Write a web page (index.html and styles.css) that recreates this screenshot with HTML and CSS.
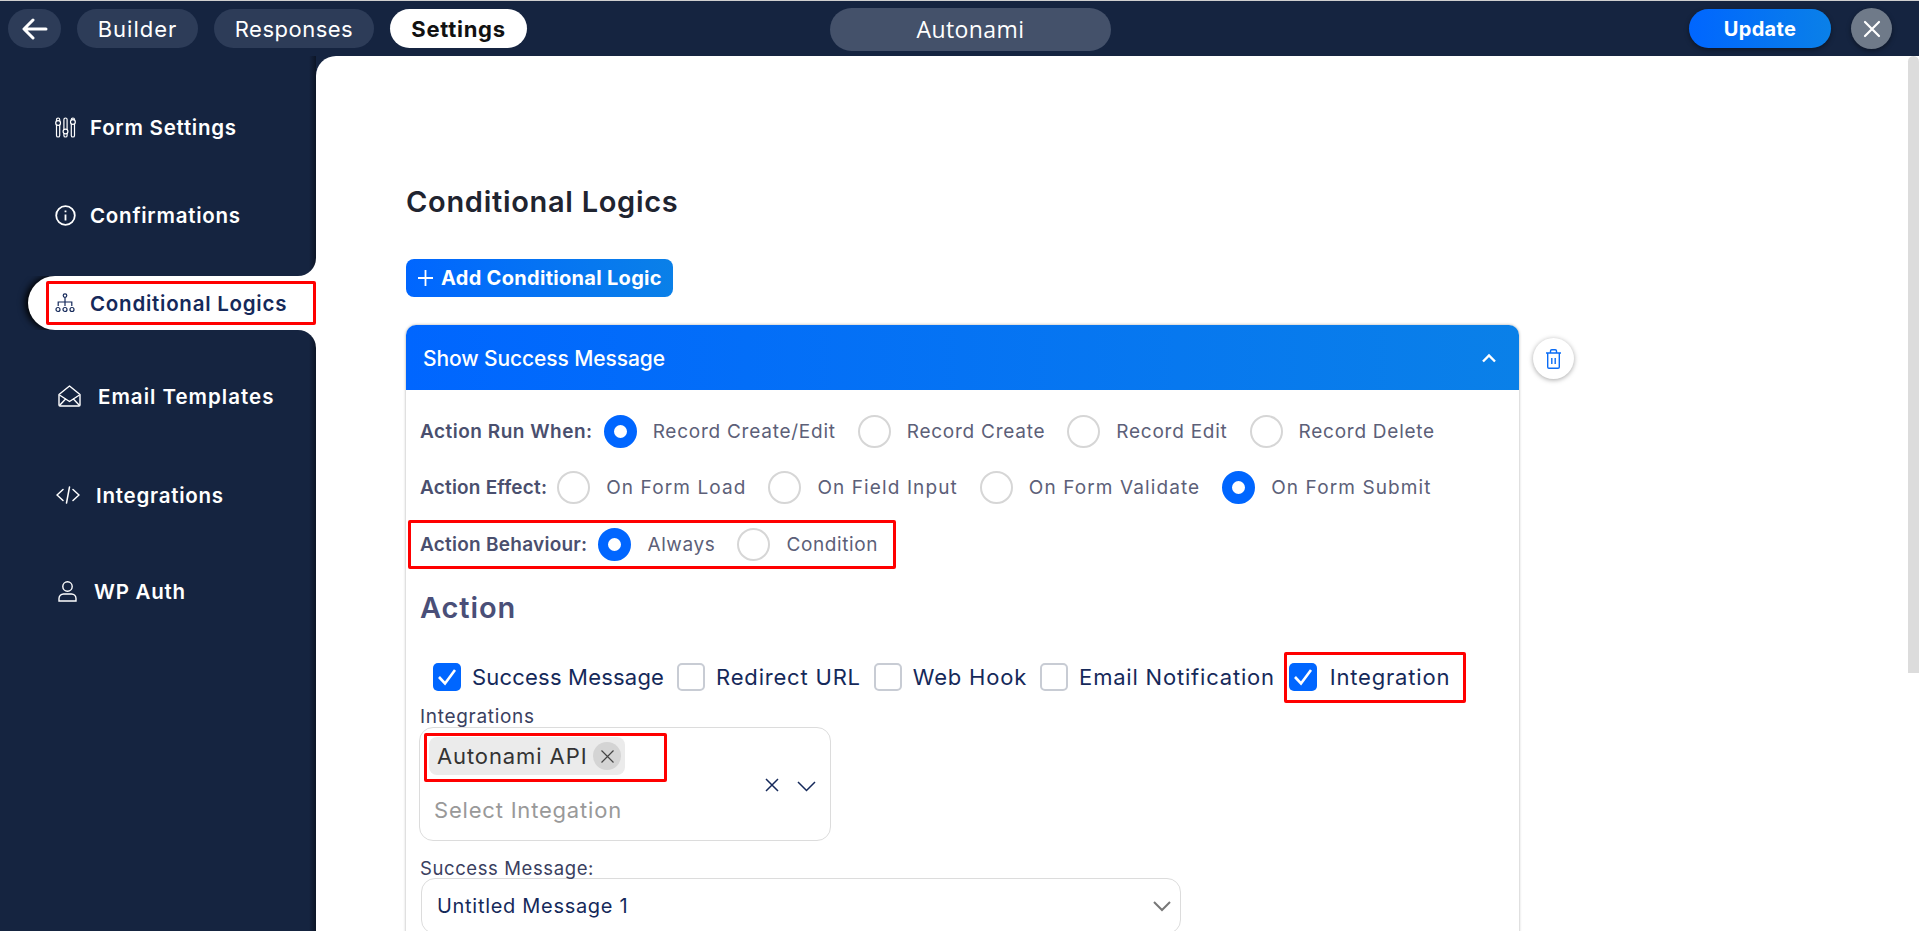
FILE: index.html
```html
<!DOCTYPE html>
<html>
  <head>
    <meta charset="utf-8">
    <title>Autonami - Conditional Logics</title>
    <link rel="stylesheet" href="styles.css">
  </head>
  <body>
    <div class="topbar">
      <div class="pill back">
        <svg width="26" height="22" viewBox="0 0 26 22" fill="none" stroke="#fff" stroke-width="3" stroke-linecap="round" stroke-linejoin="round"><path d="M24 11H3M11 2l-9 9 9 9"/></svg>
      </div>
      <div class="pill builder">Builder</div>
      <div class="pill responses">Responses</div>
      <div class="pill settings">Settings</div>
      <div class="form-name">Autonami</div>
      <div class="update">Update</div>
      <div class="close">
        <svg width="18" height="18" viewBox="0 0 18 18" stroke="#fff" stroke-width="2.2" stroke-linecap="round"><path d="M2 2l14 14M16 2L2 16"/></svg>
      </div>
    </div>

    <div class="page">
      <div class="sidebar">
        <div class="side-block first">
          <div class="side-item">
            <span class="side-icon">
              <svg width="21" height="21" viewBox="0 0 21 21" fill="none" stroke="#fff" stroke-width="1.2"><rect x="1.500" y="1" width="3.200" height="19" rx="1.600"/><rect x="8.900" y="1" width="3.200" height="19" rx="1.600"/><rect x="16.300" y="1" width="3.200" height="19" rx="1.600"/><circle cx="3.100" cy="6" r="2.400" fill="#152440"/><circle cx="10.500" cy="14.500" r="2.400" fill="#152440"/><circle cx="17.900" cy="5" r="2.400" fill="#152440"/></svg>
            </span>
            Form Settings
          </div>
          <div class="side-item second">
            <span class="side-icon">
              <svg width="21" height="21" viewBox="0 0 21 21" fill="none" stroke="#fff" stroke-width="1.8"><circle cx="10.500" cy="10.500" r="9.300"/><path d="M10.500 9.500v6M10.500 5.500v1.800"/></svg>
            </span>
            Confirmations
          </div>
        </div>
        <div class="side-active-row">
          <div class="side-active">
            <div class="mark mark-side">
              <span class="side-icon">
                <svg width="20" height="20" viewBox="0 0 20 20" fill="none" stroke="#15295a" stroke-width="1.2"><circle cx="10" cy="2.600" r="1.800"/><path d="M10 4.400V13M10 9H3.200v4M10 9h6.800v4"/><circle cx="3" cy="16.500" r="2"/><circle cx="10" cy="16.500" r="2"/><circle cx="17" cy="16.500" r="2"/></svg>
              </span>
              Conditional Logics
            </div>
          </div>
        </div>
        <div class="side-block last">
          <div class="side-item email">
            <span class="side-icon">
              <svg width="23" height="22" viewBox="0 0 23 22" fill="none" stroke="#fff" stroke-width="1.4" stroke-linejoin="round"><path d="M1 9.500L11.500 1 22 9.500V20a1 1 0 0 1-1 1H2a1 1 0 0 1-1-1z"/><path d="M1.500 10l10 6.500 10-6.500M1.500 20.500l6.500-7M21.500 20.500l-6.500-7"/></svg>
            </span>
            Email Templates
          </div>
          <div class="side-item code">
            <span class="side-icon">
              <svg width="24" height="18" viewBox="0 0 24 18" fill="none" stroke="#fff" stroke-width="1.5" stroke-linecap="round"><path d="M7 3.500L1 9l6 5.500M17 3.500L23 9l-6 5.500M13.500 1L10.500 17"/></svg>
            </span>
            Integrations
          </div>
          <div class="side-item auth">
            <span class="side-icon">
              <svg width="19" height="21" viewBox="0 0 19 21" fill="none" stroke="#fff" stroke-width="1.4"><circle cx="9.500" cy="5.500" r="4.700"/><path d="M1 20v-2.500a4.500 4.500 0 0 1 4.500-4.500h8a4.500 4.500 0 0 1 4.500 4.500V20z"/></svg>
            </span>
            WP Auth
          </div>
        </div>
      </div>

      <div class="main">
        <div class="content">
          <h2 class="title">Conditional Logics</h2>
          <div class="add-btn">
            <svg width="15" height="16" viewBox="0 0 15 16" stroke="#fff" stroke-width="1.8"><path d="M7.500 0v16M0 8h15"/></svg>
            Add Conditional Logic
          </div>

          <div class="panel-wrap">
            <div class="panel">
              <div class="panel-head">
                <span>Show Success Message</span>
                <svg width="16" height="10" viewBox="0 0 16 10" fill="none" stroke="#fff" stroke-width="2.400"><path d="M2 8.500l6-6 6 6"/></svg>
              </div>
              <div class="panel-body">
                <div class="row row-run">
                  <span class="row-label">Action Run When:</span>
                  <span class="radio on"></span><span class="opt">Record Create/Edit</span>
                  <span class="radio"></span><span class="opt">Record Create</span>
                  <span class="radio"></span><span class="opt">Record Edit</span>
                  <span class="radio"></span><span class="opt">Record Delete</span>
                </div>
                <div class="row row-effect">
                  <span class="row-label">Action Effect:</span>
                  <span class="radio"></span><span class="opt">On Form Load</span>
                  <span class="radio"></span><span class="opt">On Field Input</span>
                  <span class="radio"></span><span class="opt">On Form Validate</span>
                  <span class="radio on"></span><span class="opt">On Form Submit</span>
                </div>
                <div class="mark mark-row">
                  <div class="row row-last">
                    <span class="row-label">Action Behaviour:</span>
                    <span class="radio on"></span><span class="opt">Always</span>
                    <span class="radio"></span><span class="opt">Condition</span>
                  </div>
                </div>

                <h3 class="action-title">Action</h3>

                <div class="checks">
                  <span class="check on"><svg width="20" height="18" viewBox="0 0 20 18" fill="none" stroke="#fff" stroke-width="2.600"><path d="M2 9l6 6.500L18 2"/></svg></span>
                  <span class="check-text tight">Success Message</span>
                  <span class="check"></span>
                  <span class="check-text">Redirect URL</span>
                  <span class="check"></span>
                  <span class="check-text">Web Hook</span>
                  <span class="check"></span>
                  <span class="check-text">Email Notification</span>
                  <div class="mark mark-check">
                    <span class="check on"><svg width="20" height="18" viewBox="0 0 20 18" fill="none" stroke="#fff" stroke-width="2.600"><path d="M2 9l6 6.500L18 2"/></svg></span>
                    <span class="check-text">Integration</span>
                  </div>
                </div>

                <div class="field-label integrations-label">Integrations</div>
                <div class="multi">
                  <div class="multi-left">
                    <div class="mark mark-chip">
                      <div class="chip">
                        Autonami API
                        <span class="chip-x"><svg width="13" height="13" viewBox="0 0 13 13" stroke="#444" stroke-width="1.200"><path d="M.5.5l12 12M12.500.5l-12 12"/></svg></span>
                      </div>
                    </div>
                    <div class="placeholder">Select Integation</div>
                  </div>
                  <div class="multi-icons">
                    <svg width="14" height="14" viewBox="0 0 14 14" stroke="#15295a" stroke-width="1.500"><path d="M1 1l12 12M13 1L1 13"/></svg>
                    <svg class="multi-chevron" width="19" height="11" viewBox="0 0 19 11" fill="none" stroke="#15295a" stroke-width="1.500"><path d="M1 1l8.500 8.500L18 1"/></svg>
                  </div>
                </div>

                <div class="field-label success-label">Success Message:</div>
                <div class="single">
                  <span>Untitled Message 1</span>
                  <svg width="18" height="11" viewBox="0 0 18 11" fill="none" stroke="#777" stroke-width="2"><path d="M1 1l8 8 8-8"/></svg>
                </div>
              </div>
            </div>
            <div class="trash">
              <svg width="15" height="20" viewBox="0 0 15 20" fill="none" stroke="#0a6cf5" stroke-width="1.400"><path d="M1.700 4v14a1.300 1.300 0 0 0 1.300 1.300h9a1.300 1.300 0 0 0 1.300-1.300V4M0 4h15M4.500 4V2a1.300 1.300 0 0 1 1.300-1.300h3.400A1.300 1.300 0 0 1 10.500 2v2M5.800 9v6M9.200 9v6"/></svg>
            </div>
          </div>
        </div>
        <div class="scroll-track"><div class="scroll-thumb"></div></div>
      </div>
    </div>
  </body>
</html>
```

FILE: styles.css
```css
html, body, div, h2, h3, span{
  margin:0px;
  padding:0px;
  box-sizing:border-box;
}
html, body{
  height:100%;
  overflow:hidden;
}
body{
  background-color:#152440;
  font-family:"Inter", "Liberation Sans", sans-serif;
  color:#15295a;
}

/* top bar */
.topbar{
  height:56px;
  border-top:1px solid #cfcfcf;
  display:flex;
  align-items:flex-start;
  background-color:#152440;
  color:#fff;
  font-size:22px;
}
.pill{
  height:39px;
  margin-top:8px;
  margin-right:16px;
  border-radius:20px;
  background-color:#2d3c58;
  display:flex;
  justify-content:center;
  align-items:center;
}
.back{
  width:53px;
  margin-left:8px;
}
.builder{
  width:121px;
  letter-spacing:1px;
}
.responses{
  width:160px;
  letter-spacing:0.5px;
}
.settings{
  width:137px;
  background-color:#fff;
  color:#111;
  font-weight:700;
  letter-spacing:0.7px;
}
.form-name{
  width:281px;
  height:43px;
  margin-top:7px;
  margin-left:287px;
  padding-bottom:2px;
  border-radius:22px;
  background-color:#44516a;
  display:flex;
  justify-content:center;
  align-items:center;
  font-family:"Open Sans", sans-serif;
  font-size:23px;
  letter-spacing:0.4px;
}
.update{
  width:142px;
  height:39px;
  margin-top:8px;
  margin-left:578px;
  border-radius:20px;
  background:linear-gradient(90deg, #0066ff, #0a80e8);
  box-shadow:0 2px 5px rgba(0,0,0,0.4);
  display:flex;
  justify-content:center;
  align-items:center;
  font-size:20px;
  font-weight:700;
  letter-spacing:0.3px;
}
.close{
  width:41px;
  height:41px;
  margin-top:7px;
  margin-left:20px;
  border-radius:50%;
  background-color:#6f7a89;
  box-shadow:0 2px 5px rgba(0,0,0,0.4);
  display:flex;
  justify-content:center;
  align-items:center;
}

.page{
  height:875px;
  display:flex;
}

/* sidebar */
.sidebar{
  width:316px;
  flex:none;
  background-color:#fff;
  display:flex;
  flex-direction:column;
  font-size:20.5px;
  font-weight:600;
  letter-spacing:0.75px;
}
.side-block{
  background:linear-gradient(90deg, #152440 calc(100% - 7px), #0c1526);
  color:#fff;
}
.side-block.first{
  height:220px;
  padding-top:47px;
  border-bottom-right-radius:18px;
}
.side-block.last{
  flex:1;
  padding-top:42px;
  border-top-right-radius:18px;
}
.side-item{
  height:48px;
  padding-left:55px;
  display:flex;
  align-items:center;
}
.side-item.second{
  margin-top:40px;
}
.side-item.email{
  letter-spacing:1px;
}
.side-item.code{
  margin-top:51px;
}
.side-item.auth{
  margin-top:48px;
}
.side-icon{
  width:35px;
  flex:none;
  display:flex;
  align-items:center;
}
.email .side-icon{
  width:43px;
  padding-left:3px;
}
.code .side-icon{
  width:41px;
  padding-left:1px;
}
.auth .side-icon{
  width:39px;
  padding-left:3px;
}
.side-active-row{
  height:54px;
  padding-left:28px;
  background-color:#152440;
}
.side-active{
  height:54px;
  padding:5px 0 5px 18px;
  background-color:#fff;
  border-radius:27px 0 0 27px;
  box-shadow:-3px 0 7px #000;
  clip-path:inset(0 0 0 -12px);
}

/* red marks */
.mark{
  border:3px solid #f00;
  border-radius:2px;
}
.mark-side{
  height:44px;
  padding-left:6px;
  display:flex;
  align-items:center;
  color:#15295a;
}
.mark-row{
  width:488px;
  height:49px;
  margin:-7px 0 0 -12px;
  padding:5px 0 0 9px;
}
.mark-check{
  display:flex;
  align-items:center;
  flex:none;
  height:51px;
  width:182px;
  padding-left:2px;
  margin-left:-4px;
}
.mark-check .check-text{
  margin-left:13px;
}
.mark-chip{
  width:243px;
  height:49px;
  margin:5px 0 0 4px;
  padding:1px 0 0 2px;
}

/* main area */
.main{
  flex:1;
  min-width:0;
  background-color:#fff;
  border-top-left-radius:20px;
  display:flex;
}
.content{
  flex:1;
  min-width:0;
  padding:130px 0 0 90px;
}
.title{
  font-size:29px;
  line-height:32px;
  font-weight:600;
  color:#1f2430;
  letter-spacing:0.7px;
}
.add-btn{
  width:267px;
  height:38px;
  margin-top:41px;
  padding-left:12px;
  border-radius:8px;
  background:linear-gradient(90deg, #0066ff, #0a80e8);
  color:#fff;
  font-size:20px;
  font-weight:700;
  letter-spacing:0.3px;
  display:flex;
  align-items:center;
  gap:8px;
}
.panel-wrap{
  margin-top:28px;
  display:flex;
  align-items:flex-start;
}
.panel{
  width:1113px;
  flex:none;
  border-radius:10px 10px 0 0;
  box-shadow:0 0 3px rgba(0,0,0,0.35);
}
.panel-head{
  height:65px;
  padding:1px 22px 0 17px;
  border-radius:10px 10px 0 0;
  background:linear-gradient(90deg, #0066ff, #0a80e8);
  color:#fff;
  font-size:21px;
  font-weight:500;
  letter-spacing:-0.1px;
  display:flex;
  justify-content:space-between;
  align-items:center;
}
.panel-body{
  height:600px;
  padding:25px 0 0 14px;
  background-color:#fff;
}
.trash{
  width:41px;
  height:41px;
  margin:13px 0 0 14px;
  border-radius:50%;
  background-color:#fff;
  box-shadow:0 1px 5px rgba(0,0,0,0.35);
  display:flex;
  justify-content:center;
  align-items:center;
}

/* radio rows */
.row{
  display:flex;
  align-items:center;
  height:33px;
  margin-bottom:23px;
  font-size:19px;
}
.row-last{
  margin-bottom:0;
}
.row-label{
  flex:none;
  margin-right:11px;
  font-size:19px;
  font-weight:600;
  color:#4a4f6e;
  letter-spacing:0.25px;
  white-space:nowrap;
}
.row-run .row-label{
  letter-spacing:0.5px;
}
.row-effect .row-label{
  margin-right:10px;
  letter-spacing:0.2px;
}
.radio{
  width:33px;
  height:33px;
  flex:none;
  border:2px solid #d6d6d6;
  border-radius:50%;
}
.radio.on{
  border:10px solid #0066ff;
}
.opt{
  margin:0 22px 0 16px;
  color:#5c6078;
  font-weight:400;
  letter-spacing:0.6px;
  white-space:nowrap;
}
.row-run .opt{
  letter-spacing:0.75px;
}
.row-effect .opt{
  letter-spacing:1.1px;
}
.action-title{
  height:36px;
  margin-top:21px;
  font-size:29px;
  line-height:36px;
  font-weight:600;
  color:#4a4f78;
  letter-spacing:0.9px;
}

/* checkboxes */
.checks{
  margin:37px 0 0 13px;
  height:28px;
  display:flex;
  align-items:center;
  font-size:22px;
  letter-spacing:0.8px;
}
.check{
  width:28px;
  height:28px;
  flex:none;
  border:2px solid #c8ccd4;
  border-radius:5px;
  display:flex;
  justify-content:center;
  align-items:center;
}
.check.on{
  border:none;
  background-color:#0066ff;
}
.check-text{
  margin:0 13px 0 11px;
  color:#15295a;
  white-space:nowrap;
}
.check-text.tight{
  letter-spacing:0.2px;
}

/* selects */
.field-label{
  font-size:19px;
  line-height:22px;
  color:#3a4060;
  letter-spacing:0.7px;
}
.integrations-label{
  margin-top:15px;
}
.multi{
  width:412px;
  height:114px;
  margin-left:-1px;
  margin-top:-1px;
  border:1px solid #dcdcdc;
  border-radius:14px;
  display:flex;
  font-size:22px;
}
.multi-left{
  flex:1;
}
.chip{
  width:196px;
  height:38px;
  padding-left:8px;
  border-radius:8px;
  background-color:#ebebeb;
  color:#333;
  display:flex;
  align-items:center;
  justify-content:space-between;
  letter-spacing:0.9px;
  white-space:nowrap;
}
.chip-x{
  width:28px;
  height:28px;
  margin-right:4px;
  flex:none;
  border-radius:50%;
  background-color:#d4d4d4;
  display:flex;
  justify-content:center;
  align-items:center;
}
.placeholder{
  margin:15px 0 0 14px;
  color:#999;
  letter-spacing:0.8px;
}
.multi-icons{
  width:90px;
  flex:none;
  padding:50px 0 0 25px;
  display:flex;
  align-items:flex-start;
  gap:18px;
}
.multi-chevron{
  margin-top:3px;
}
.success-label{
  margin-top:17px;
  line-height:21px;
  font-size:18.5px;
  letter-spacing:0.6px;
}
.single{
  width:760px;
  height:56px;
  margin-top:-1px;
  margin-left:1px;
  padding:0 9px 0 15px;
  border:1px solid #dcdcdc;
  border-radius:14px;
  font-size:20px;
  color:#15295a;
  letter-spacing:0.7px;
  display:flex;
  justify-content:space-between;
  align-items:center;
}

/* scrollbar */
.scroll-track{
  width:11px;
  flex:none;
  background-color:#fff;
}
.scroll-thumb{
  height:617px;
  border-radius:6px 6px 0 0;
  background-color:#dcdcdc;
}
```
